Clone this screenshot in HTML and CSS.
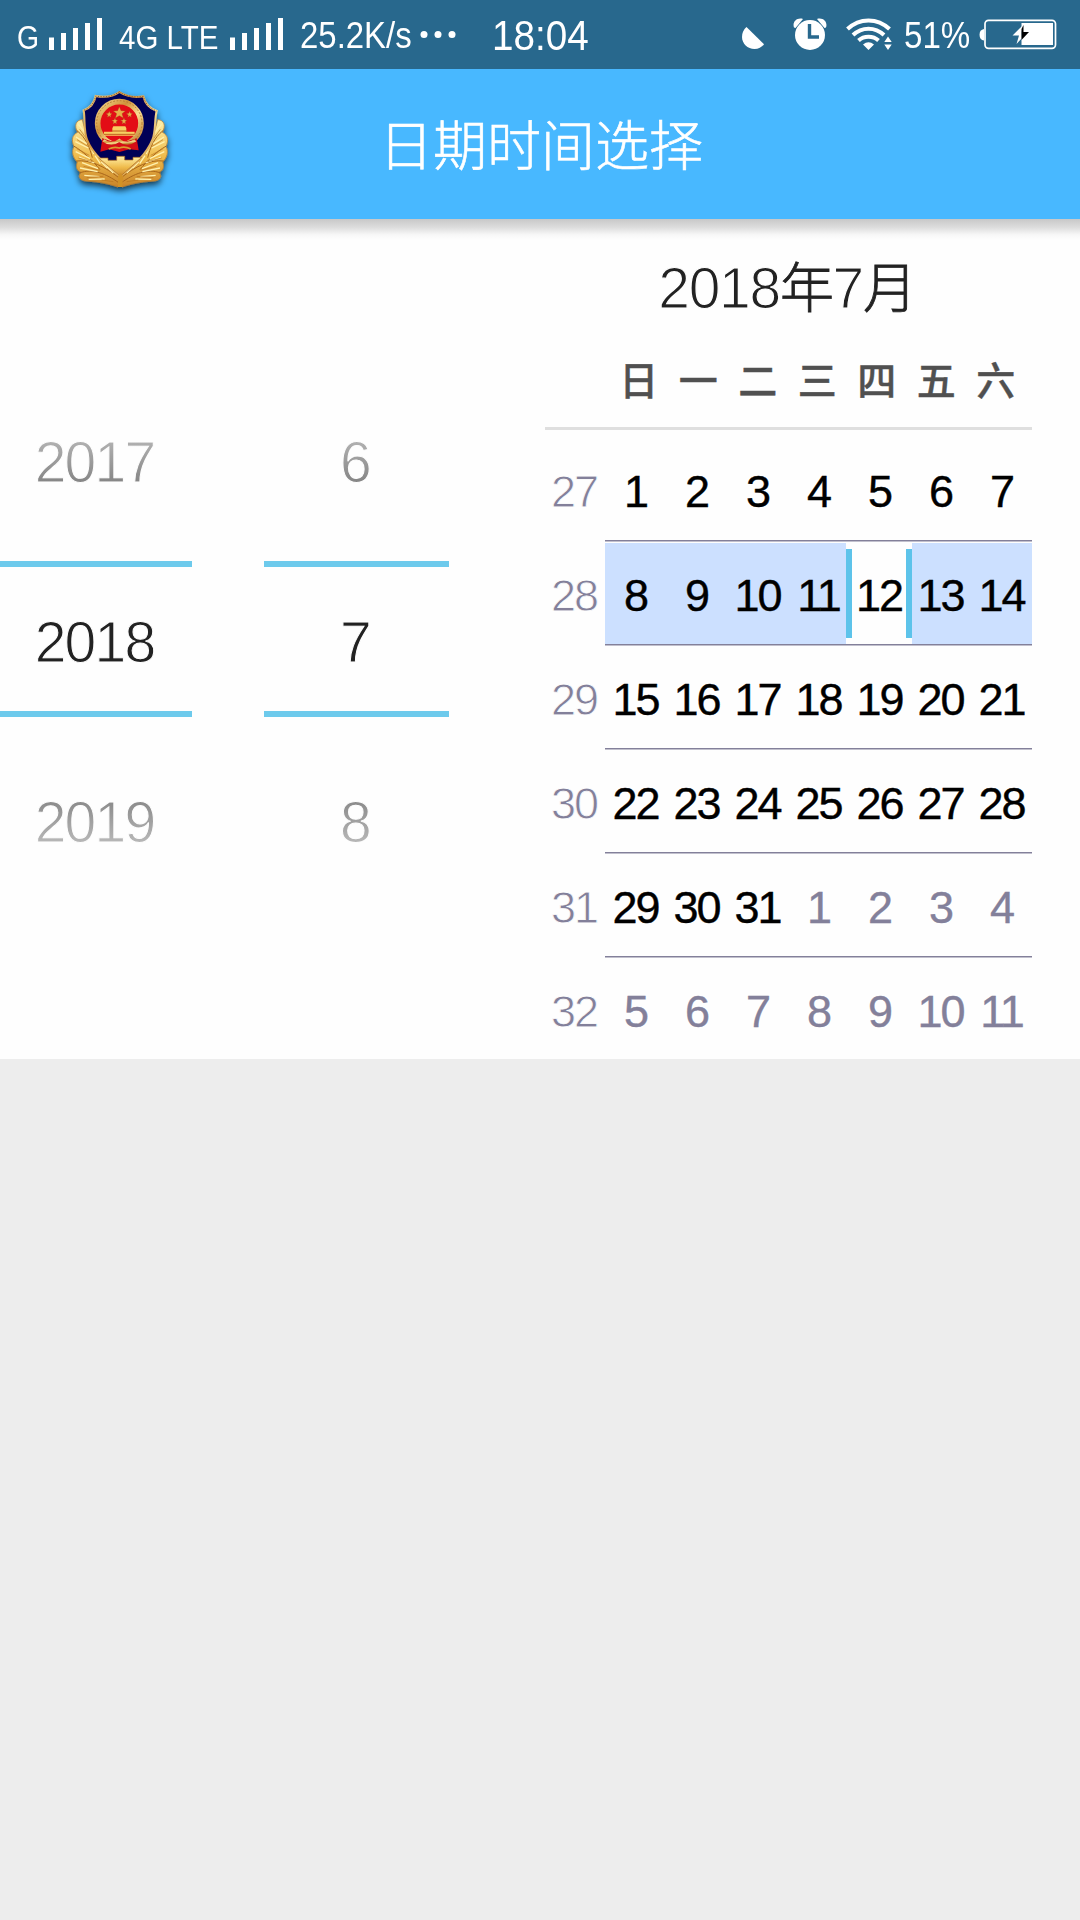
FILE: index.html
```html
<!DOCTYPE html>
<html lang="zh-CN">
<head>
<meta charset="utf-8">
<title>日期时间选择</title>
<link rel="stylesheet" href="styles.css">
</head>
<body>
<div class="status">
  <span class="net net-g">G</span>
  <svg class="bars" viewBox="0 0 53 32"><path d="M0 19.500h5V32H0zM12 15h5v17h-5zM24 10h5v22h-5zM36 5h5v27h-5zM48 0h5v32h-5z"/></svg>
  <span class="net net-lte">4G LTE</span>
  <svg class="bars" viewBox="0 0 53 32"><path d="M0 19.500h5V32H0zM12 15h5v17h-5zM24 10h5v22h-5zM36 5h5v27h-5zM48 0h5v32h-5z"/></svg>
  <span class="speed">25.2K/s</span>
  <svg class="dots" viewBox="0 0 36 32"><circle cx="4" cy="16.500" r="3.500"/><circle cx="18" cy="16.500" r="3.500"/><circle cx="32" cy="16.500" r="3.500"/></svg>
  <span class="clock">18:04</span>
  <svg class="moon" viewBox="0 0 22 32"><path d="M4.500 9L22 26.300A12 12 0 0 1 12.500 31C5.500 31 0 25.500 0 19C0 15 1.500 11.500 4.500 9z"/></svg>
  <svg class="alarm" viewBox="0 0 34 32"><circle cx="17" cy="17" r="15"/><path d="M1 9.500C-1 4 4-1 10 1L2.500 10zM33 9.500C35 4 30-1 24 1L31.500 10z"/><path d="M16.500 6v13h9.500" fill="none" stroke="#28688d" stroke-width="3.400"/></svg>
  <svg class="wifi" viewBox="0 0 46 32"><g fill="none" stroke="#fff" stroke-width="4"><path d="M1.500 11C13.500-.5 31.500-.5 43.500 11"/><path d="M7 17C16 8.500 29 8.500 38 17"/><path d="M12.500 22.500C18 17.500 27 17.500 32.500 22.500"/></g><path d="M17 26.500Q22.500 22 28 26.500L22.500 32zM38.300 24l3.700-5.500 3.700 5.500zM38.300 26.500h7.400L42 32z"/></svg>
  <span class="percent">51%</span>
  <svg class="battery" viewBox="0 0 78 32"><path d="M5 11v11.500C2 22 .5 20 .5 16.700S2 11.500 5 11z"/><rect x="6" y="2.300" width="70.500" height="28" rx="3.500" fill="none" stroke="#fff" stroke-width="1.700"/><path d="M42.500 5H74v22H42.500z"/><path d="M44.500 6.500L33.500 17.500H40L37.500 26l5-5.500V14z"/><path d="M42.500 11l2-4v7h5.500l-7.500 8z" fill="#000"/></svg>
</div>
<header class="header">
  <svg class="emblem" viewBox="0 0 420 420">
    <defs>
      <linearGradient id="gold" x1="0" y1="0" x2="1" y2="1"><stop offset="0" stop-color="#f3d98c"/><stop offset=".35" stop-color="#d0923a"/><stop offset=".6" stop-color="#f9dd92"/><stop offset="1" stop-color="#b87422"/></linearGradient>
      <linearGradient id="leaf" x1="0" y1="0" x2="0" y2="1"><stop offset="0" stop-color="#fff0a8"/><stop offset=".55" stop-color="#efbb4b"/><stop offset="1" stop-color="#c98429"/></linearGradient>
      <filter id="shade" x="-20%" y="-20%" width="140%" height="140%"><feDropShadow dx="0" dy="10" stdDeviation="9" flood-color="#000" flood-opacity=".7"/></filter>
      <g id="wing">
        <path d="M97 152C77 153 72 170 83 190C67 198 63 212 72 233C64 247 68 265 82 279C76 296 82 307 94 310C82 321 88 333 106 336C135 338 165 341 204 354L212 320C185 288 165 265 144 245C120 225 105 190 97 152z" fill="url(#leaf)" stroke="#bd7925" stroke-width="2"/>
        <path d="M80 184C110 208 119 237 127 266M71 231C103 249 130 277 150 302M79 276C121 271 166 294 205 325M88 312C128 297 169 315 206 341" fill="none" stroke="#a9661b" stroke-width="3"/>
        <path d="M85 166l28 34M78 204l32 20M76 218l39 19M77 248l44 21M87 264l46 18M96 281l48 18M90 297l53 11M103 319l46 4M116 331l48-1M131 255l-13-33M151 284l-16-24M172 297l-18-18M190 312l-19-19" fill="none" stroke="#fff1af" stroke-width="4"/>
        <path d="M89 181l24 33M81 212l34 21M80 239l38 20M85 267l42 11M101 292l48 12M110 326l50-4M155 333l35 5" fill="none" stroke="#b9741e" stroke-width="2"/>
      </g>
    </defs>
    <g filter="url(#shade)">
      <use href="#wing"/><use href="#wing" transform="matrix(-1 0 0 1 420 0)"/>
      <path d="M208 69C188 84 163 86 137 81C133 103 118 118 101 124C106 151 100 185 112 214C130 257 166 286 211 322C253 287 289 257 307 213C318 186 313 151 320 126C300 119 285 104 280 82C252 87 228 82 208 69z" fill="#060056" stroke="url(#gold)" stroke-width="6"/>
      <path d="M208 68C188 84 163 86 137 81C133 103 118 118 101 124M208 68C228 82 252 87 280 82C285 104 300 119 320 126" fill="none" stroke="#925c31" stroke-width="3" stroke-dasharray="4 4"/>
      <path d="M146 267h28v7h26v-12h24v11h25v-8h26L211 322z" fill="url(#leaf)" stroke="#a96719" stroke-width="2"/>
      <circle cx="208" cy="163" r="65" fill="#e30b12" stroke="url(#gold)" stroke-width="17"/>
      <circle cx="208" cy="163" r="68" fill="none" stroke="#b87b35" stroke-width="3" stroke-dasharray="5 5"/>
      <path d="M157 208Q208 230 260 208L266 244L238 241L208 249L178 241L151 248z" fill="#d60c14"/>
      <path d="M160 214Q184 232 208 214Q231 232 256 214" fill="none" stroke="url(#gold)" stroke-width="9"/>
      <path d="M176 240Q192 232 208 237Q225 231 242 240" fill="none" stroke="#d99b33" stroke-width="5"/>
      <path d="M187 178l3-6h36l3 6v10h25v12h-92v-12h25z" fill="#f7ce62"/>
      <path d="M186 186h45M162 196h92" stroke="#c05e20" stroke-width="3"/>
      <g fill="#e8ae4a" stroke="#a9481b"><path d="M208 113l5 12 13 1-10 8 4 13-12-7-12 7 4-13-10-8 13-1z"/><path id="s" d="M178 127l2.500 6 6 1-5 4 1.500 7-5-4-6 4 2-7-6-4 7-1z"/><use href="#s" x="61"/><use href="#s" x="17" y="20"/><use href="#s" x="44" y="20"/></g>
      <path d="M204 321l7-9 8 9-2 33h-13z" fill="#d19127"/>
    </g>
  </svg>
  <h1 class="title">日期时间选择</h1>
</header>
<main class="panel">
  <section class="wheel wheel-year">
    <div class="option above">2017</div>
    <div class="option current">2018</div>
    <div class="option below">2019</div>
  </section>
  <section class="wheel wheel-month">
    <div class="option above">6</div>
    <div class="option current">7</div>
    <div class="option below">8</div>
  </section>
  <section class="calendar">
    <h2 class="month">2018<span>年</span>7<span>月</span></h2>
    <div class="weekdays"><span>日</span><span>一</span><span>二</span><span>三</span><span>四</span><span>五</span><span>六</span></div>
    <div class="week"><i>27</i><div class="days"><b>1</b><b>2</b><b>3</b><b>4</b><b>5</b><b>6</b><b>7</b></div></div>
    <div class="week active"><i>28</i><div class="days"><b>8</b><b>9</b><b>10</b><b>11</b><b class="selected">12</b><b>13</b><b>14</b></div></div>
    <div class="week"><i>29</i><div class="days"><b>15</b><b>16</b><b>17</b><b>18</b><b>19</b><b>20</b><b>21</b></div></div>
    <div class="week"><i>30</i><div class="days"><b>22</b><b>23</b><b>24</b><b>25</b><b>26</b><b>27</b><b>28</b></div></div>
    <div class="week"><i>31</i><div class="days"><b>29</b><b>30</b><b>31</b><b class="other">1</b><b class="other">2</b><b class="other">3</b><b class="other">4</b></div></div>
    <div class="week"><i>32</i><div class="days"><b class="other">5</b><b class="other">6</b><b class="other">7</b><b class="other">8</b><b class="other">9</b><b class="other">10</b><b class="other">11</b></div></div>
  </section>
</main>
</body>
</html>
```

FILE: styles.css
```css
* { box-sizing: border-box; }
body {
  margin: 0;
  width: 1080px;
  height: 1920px;
  overflow: hidden;
  background: #ededed;
  font-family: "Liberation Sans", "Noto Sans CJK SC", sans-serif;
}

/* Status bar */
.status {
  display: grid;
  grid-template-columns: 32px 70px 111px 70px 120px 72px 250px 51px 53px 58px 75px 78px;
  padding: 18px 0 0 17px;
  height: 69px;
  background: #28688d;
  color: #fff;
  white-space: nowrap;
}
.status svg { height: 32px; fill: #fff; display: block; }
.status span { line-height: 32px; transform-origin: left; }
.net { font-size: 33px; padding-top: 4px; }
.net-g { transform: scaleX(.86); }
.net-lte { transform: scaleX(.894); }
.status .speed { font-size: 36px; padding-top: 2px; transform: scaleX(.915); }
.bars { width: 53px; }
.dots { width: 36px; }
.status .clock { font-size: 42px; padding-top: 2px; transform: scaleX(.92); }
.moon { width: 22px; }
.alarm { width: 34px; }
.wifi { width: 46px; }
.status .percent { font-size: 36px; padding-top: 2px; transform: scaleX(.92); }
.battery { width: 78px; }

/* Title bar */
.header {
  position: relative;
  z-index: 1;
  display: flex;
  height: 150px;
  padding: 0 0 0 50px;
  background: #48b8ff;
}
.header::after {
  content: "";
  position: absolute;
  top: 150px;
  left: 0;
  width: 100%;
  height: 21px;
  background: linear-gradient(#c8c8c8, #ddd 40%, #f7f7f7 75%, #fefefe);
}
.emblem { width: 140px; height: 140px; }
.title {
  margin: 0 0 0 189px;
  font: 300 54px/147px "Noto Sans CJK SC", sans-serif;
  color: #fff;
  -webkit-text-stroke: .6px #fff;
}

/* Pickers and calendar */
.panel { display: flex; height: 840px; background: #fefefe; }
.wheel { padding: 150px 0; text-align: center; }
.wheel-year { width: 192px; }
.wheel-month { width: 185px; margin-left: 72px; }
.option {
  position: relative;
  height: 192px;
  padding-right: 3px;
  font-size: 57px;
  letter-spacing: -1.800px;
  color: #222;
  -webkit-text-stroke: 1px #fefefe;
}
.option.current {
  height: 156px;
  line-height: 151px;
  border: solid #6dcaec;
  border-width: 6px 0;
}
.above { line-height: 187px; }
.below { line-height: 211px; }
.above::after, .below::after {
  content: "";
  position: absolute;
  inset: 0;
  background: linear-gradient(#fefefe, rgba(254, 254, 254, .07));
}
.below::after { transform: scaleY(-1); }

.calendar { width: 487px; margin-left: 96px; }
.month {
  margin: 0;
  padding-right: 3px;
  height: 138px;
  font: 400 57px/138px "Liberation Sans", "Noto Sans CJK SC", sans-serif;
  letter-spacing: -1.300px;
  text-align: center;
  color: #222;
  -webkit-text-stroke: 1.200px #fefefe;
}
.month span { font: 300 54px/1 "Noto Sans CJK SC", sans-serif; -webkit-text-stroke: .8px #222; }
.weekdays {
  display: grid;
  grid-template-columns: repeat(7, 59.500px);
  padding-left: 64px;
  height: 73px;
  border-bottom: 3px solid #dfdfdf;
  font: 500 39px/42px "Noto Sans CJK SC", sans-serif;
  text-align: center;
  color: #505050;
  -webkit-text-stroke: .4px #505050;
}
.week {
  display: grid;
  grid-template-columns: 60px 427px;
  height: 104px;
  font-size: 45px;
  line-height: 107px;
  letter-spacing: -2px;
  text-align: center;
}
.weekdays + .week { height: 112px; padding-top: 8px; }
.week i { padding-right: 2px; font-style: normal; color: #83809a; -webkit-text-stroke: .8px #fefefe; }
.days {
  display: grid;
  grid-template-columns: repeat(7, 61px);
  height: 104px;
  padding-bottom: 2px;
  background: linear-gradient(#83809a 50%, #c1c0cd 50%) bottom / 100% 2px no-repeat;
}
.week:last-child .days { background: none; }
.days b { font-weight: 400; color: #000; -webkit-text-stroke: .4px; }
.days .other { color: #83809a; }
.active .days { padding-top: 1px; }
.active b { height: 101px; background: #cce0ff; line-height: 105px; }
.active .selected {
  position: relative;
  height: 89px;
  margin: 6px -2px 6px -3px;
  border: solid #5dc3ea;
  border-width: 0 6px;
  background: #fefefe;
  box-shadow: 0 -6px #fefefe, 0 6px #fefefe;
  line-height: 93px;
}
```
